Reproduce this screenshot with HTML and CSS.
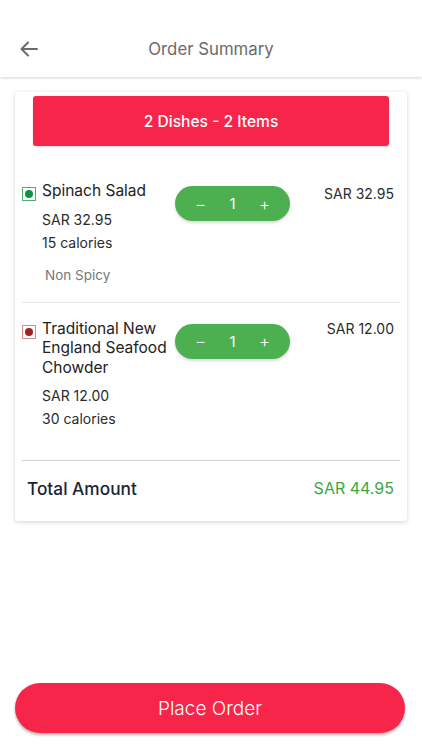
FILE: index.html
```html
<!DOCTYPE html>
<html lang="en">
<head>
    <meta charset="UTF-8">
    <meta name="viewport" content="width=device-width, initial-scale=1.0">
    <title>Order Summary</title>
    <link rel="stylesheet" href="styles.css">
</head>
<body>
    <header class="topbar">
        <button class="back-btn" aria-label="Back">
            <svg width="18" height="16" viewBox="0 0 18 16" fill="none" stroke="#6b6b6b" stroke-width="2" stroke-linecap="round" stroke-linejoin="round">
                <path d="M17 8H2M8 1.5L1.5 8 8 14.5"/>
            </svg>
        </button>
        <h1 class="title">Order Summary</h1>
    </header>

    <main class="content">
        <div class="card">
            <div class="banner">2 Dishes - 2 Items</div>

            <div class="item">
                <span class="veg-mark veg"><span class="dot"></span></span>
                <div class="item-info">
                    <div class="item-name">Spinach Salad</div>
                    <div class="item-price">SAR 32.95</div>
                    <div class="item-cal">15 calories</div>
                    <div class="item-note">Non Spicy</div>
                </div>
                <div class="stepper">
                    <span class="step">−</span>
                    <span class="qty">1</span>
                    <span class="step">+</span>
                </div>
                <div class="item-total">SAR 32.95</div>
            </div>

            <div class="item item-last">
                <span class="veg-mark nonveg"><span class="dot"></span></span>
                <div class="item-info">
                    <div class="item-name">Traditional New England Seafood Chowder</div>
                    <div class="item-price">SAR 12.00</div>
                    <div class="item-cal">30 calories</div>
                </div>
                <div class="stepper">
                    <span class="step">−</span>
                    <span class="qty">1</span>
                    <span class="step">+</span>
                </div>
                <div class="item-total">SAR 12.00</div>
            </div>

            <div class="total-row">
                <span class="total-label">Total Amount</span>
                <span class="total-value">SAR 44.95</span>
            </div>
        </div>
    </main>

    <div class="footer">
        <button class="place-btn">Place Order</button>
    </div>
</body>
</html>
```

FILE: styles.css
```css
* { box-sizing: border-box; }
body { margin: 0; background: #fff; font-family: Inter, "Noto Sans", sans-serif; color: #2b2b2b; height: 750px; display: flex; flex-direction: column; }

.topbar { height: 77px; display: flex; align-items: center; justify-content: center; position: relative; background: #fff; box-shadow: 0 1px 3px rgba(0,0,0,0.18); padding-top: 20px; }
.back-btn { position: absolute; left: 20px; top: 41px; background: none; border: 0; padding: 0; display: flex; }
.title { margin: 0; font-size: 16.8px; font-weight: 400; color: #6b6b6b; }

.content { padding: 15px 15px 0; flex: 1; }
.card { background: #fff; border-radius: 3px; box-shadow: 0 1px 4px rgba(0,0,0,0.18); padding: 4px 7px 0; }

.banner { margin: 0 11px 18px; height: 50px; border-radius: 3px; background: #f7254a; color: #fff; font-size: 15.6px; font-weight: 500; display: flex; align-items: center; justify-content: center; box-shadow: 0 1px 2px rgba(0,0,0,0.15); }

.item { display: flex; align-items: flex-start; padding: 17px 0 17px; border-bottom: 1px solid #e4e4e4; }
.item:first-of-type { padding-top: 1px; padding-bottom: 16px; }
.item-last { padding-top: 16px; padding-bottom: 31px; border-bottom-color: #cfcfcf; }

.veg-mark { width: 14px; height: 14px; margin-top: 6px; border: 1px solid; display: flex; align-items: center; justify-content: center; flex: none; }
.veg-mark .dot { width: 8px; height: 8px; border-radius: 50%; }
.veg { border-color: #4fb06a; }
.veg .dot { background: #0a9447; }
.nonveg { border-color: #d88a8a; }
.nonveg .dot { background: #9e2323; }

.item-info { width: 133px; margin-left: 6px; flex: none; }
.item-name { font-size: 15.5px; line-height: 19.5px; color: #222; }
.item-price { font-size: 14px; margin-top: 9px; line-height: 20px; color: #2b2b2b; }
.item-cal { font-size: 14px; margin-top: 3px; line-height: 20px; color: #2b2b2b; }
.item-note { font-size: 13.5px; margin-top: 12px; margin-left: 3px; line-height: 20px; color: #777; }

.stepper { width: 115px; height: 35px; margin-top: 5px; border-radius: 18px; background: #4caf50; color: #fff; display: flex; align-items: center; justify-content: space-between; padding: 0 20px; font-size: 15px; box-shadow: 0 2px 3px rgba(0,0,0,0.15); flex: none; }
.step { font-size: 17px; font-weight: 300; }

.item-total { flex: 1; text-align: right; padding-right: 6px; font-size: 14px; margin-top: 4px; color: #2b2b2b; }
.item-last .item-total { margin-top: 1px; }

.total-row { display: flex; justify-content: space-between; align-items: center; height: 60px; padding: 0 6px 6px 5px; }
.total-label { font-size: 17.3px; font-weight: 500; color: #1c2533; }
.total-value { font-size: 16px; color: #3aa841; }

.footer { padding: 0 17px 17px 15px; }
.place-btn { width: 100%; height: 50px; border: 0; border-radius: 25px; background: #f7254a; color: #fff; font-family: inherit; font-size: 19px; font-weight: 300; box-shadow: 0 2px 3px rgba(0,0,0,0.3); }
```
